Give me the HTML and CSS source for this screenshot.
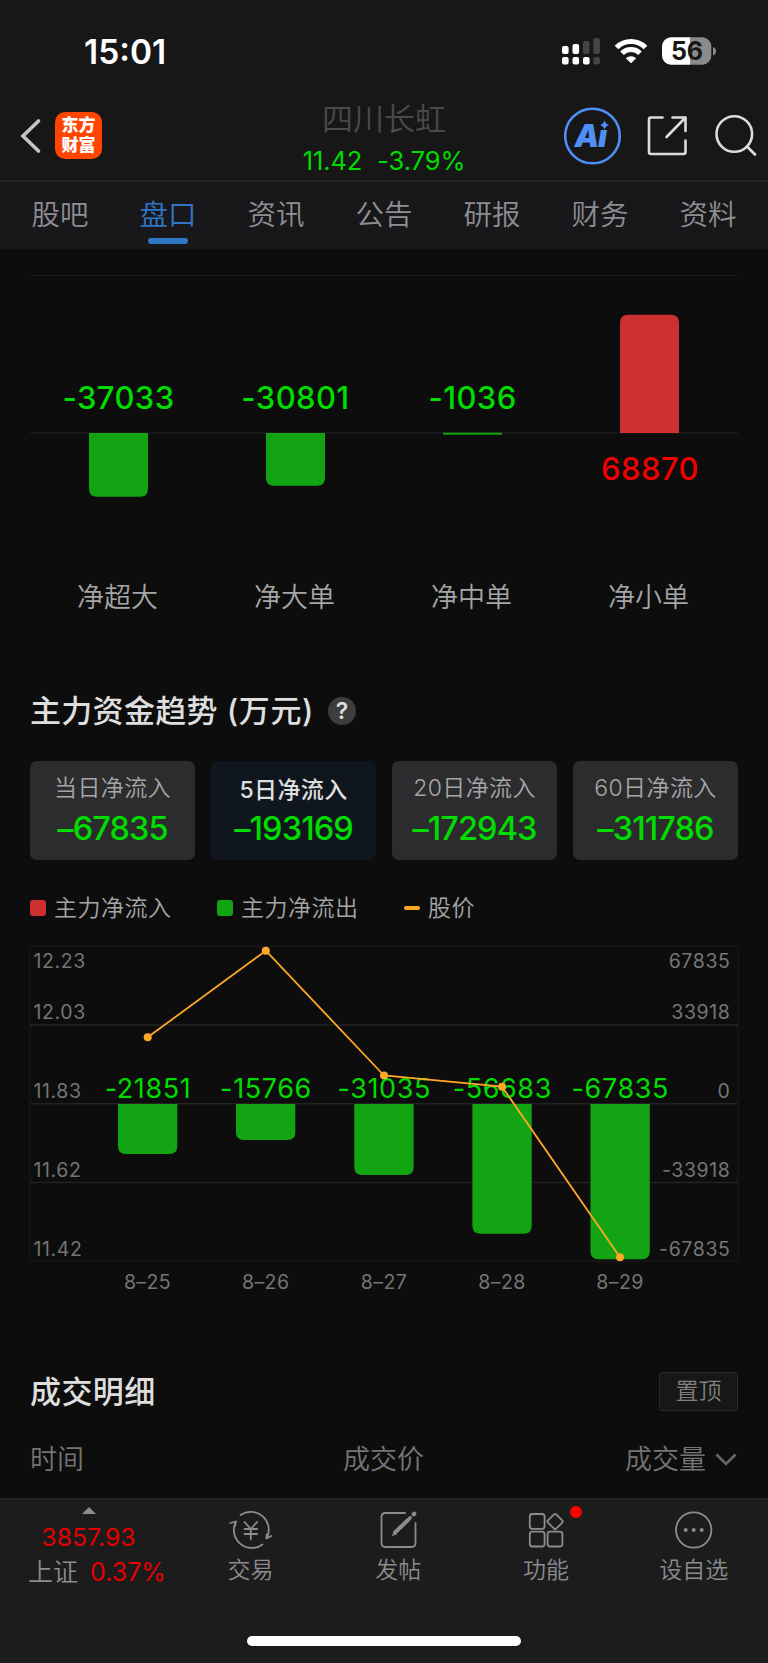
FILE: index.html
```html
<!DOCTYPE html>
<html lang="zh-CN">
<head>
    <meta charset="UTF-8">
    <meta name="viewport" content="width=device-width, initial-scale=1.0">
    <title>四川长虹</title>
    <link rel="stylesheet" href="styles.css">
</head>
<body>
    <div class="status-bar">
        <div class="clock">15:01</div>
        <svg class="status-icons" width="160" height="40" viewBox="0 0 160 40">
            <g fill="#fff">
                <rect x="2" y="16" width="6.6" height="8" rx="2"/>
                <rect x="12.5" y="14" width="6.6" height="10" rx="2"/>
                <rect x="2" y="27" width="6.6" height="7.6" rx="2"/>
                <rect x="12.5" y="27" width="6.6" height="7.6" rx="2"/>
                <rect x="23" y="27" width="6.6" height="7.6" rx="2"/>
            </g>
            <g fill="#454545">
                <rect x="23" y="11" width="6.6" height="13" rx="2"/>
                <rect x="33.3" y="8" width="6.6" height="16" rx="2"/>
                <rect x="33.3" y="27" width="6.6" height="7.6" rx="2"/>
            </g>
            <g fill="none" stroke="#fff" stroke-width="5">
                <path d="M56.5 17.5 A20.5 20.5 0 0 1 85.5 17.5"/>
                <path d="M62 23.3 A12.8 12.8 0 0 1 80 23.3"/>
            </g>
            <path d="M65.8 28.2 A7.6 7.6 0 0 1 76.2 28.2 L71 33.3 Z" fill="#fff"/>
            <path d="M111 7.3 H130 V34.7 H111 A9 9 0 0 1 102 25.7 V16.3 A9 9 0 0 1 111 7.3 Z" fill="#fff"/>
            <path d="M130 7.3 H142.3 A9 9 0 0 1 151.3 16.3 V25.7 A9 9 0 0 1 142.3 34.7 H130 Z" fill="#8b8b8b"/>
            <path d="M153 17 A4.5 4.5 0 0 1 153 25.5 Z" fill="#8b8b8b"/>
            <text class="battery-text" x="127" y="30" text-anchor="middle">56</text>
        </svg>
    </div>

    <div class="header">
        <div class="header-left">
            <svg width="24" height="40" viewBox="0 0 24 40">
                <path d="M18.5 5 L3 20 L18.5 35" fill="none" stroke="#c4c4c4" stroke-width="3.6" stroke-linecap="round"/>
            </svg>
            <div class="logo">东方<br>财富</div>
        </div>
        <div class="stock">
            <div class="stock-name">四川长虹</div>
            <div class="stock-price"><span>11.42</span><span>-3.79%</span></div>
        </div>
        <div class="header-right">
            <svg width="58" height="58" viewBox="0 0 58 58">
                <circle cx="28.5" cy="29" r="27.3" fill="none" stroke="#4f8ef5" stroke-width="2.6"/>
                <text class="ai-text" x="10.5" y="39.5">A</text>
                <text class="ai-text" x="34" y="39.5">ı</text>
                <path d="M40.5 13.5 Q41.5 17 45 18 Q41.5 19 40.5 22.5 Q39.5 19 36 18 Q39.5 17 40.5 13.5 Z" fill="#4f8ef5"/>
            </svg>
            <svg width="42" height="42" viewBox="0 0 42 42" fill="none" stroke="#dcdcdc" stroke-width="2.6" stroke-linecap="round" stroke-linejoin="round">
                <path d="M15.5 2.5 H4 Q2 2.5 2 4.5 V37 Q2 39 4 39 H36.5 Q38.5 39 38.5 37 V25.5"/>
                <path d="M25.5 2.5 H38.5 V16 M38.5 2.5 L19.5 22"/>
            </svg>
            <svg width="44" height="44" viewBox="0 0 44 44" fill="none" stroke="#dcdcdc" stroke-width="2.6" stroke-linecap="round">
                <circle cx="20.3" cy="20" r="17.8"/>
                <path d="M33 32.5 L41 40.5"/>
            </svg>
        </div>
    </div>

    <div class="tabs">
        <div class="tab">股吧</div>
        <div class="tab active">盘口</div>
        <div class="tab">资讯</div>
        <div class="tab">公告</div>
        <div class="tab">研报</div>
        <div class="tab">财务</div>
        <div class="tab">资料</div>
    </div>

    <!-- net inflow by order size -->
    <svg class="order-chart" width="768" height="391" viewBox="0 0 768 391">
        <path d="M30 26.5 H738" stroke="#1b1b1b"/>
        <path d="M30 184 H738" stroke="#1b1b1b" stroke-width="1.5"/>
        <g fill="#12a412">
            <path d="M89 184 H148 V239.7 Q148 247.7 140 247.7 H97 Q89 247.7 89 239.7 Z"/>
            <path d="M266 184 H325 V228.7 Q325 236.7 317 236.7 H274 Q266 236.7 266 228.7 Z"/>
            <rect x="443" y="183.7" width="59" height="2"/>
        </g>
        <path d="M620 184 V73.7 Q620 65.7 628 65.7 H671 Q679 65.7 679 73.7 V184 Z" fill="#cd3030"/>
        <g class="order-value">
            <text x="118.5" y="159.5">-37033</text>
            <text x="295.5" y="159.5">-30801</text>
            <text x="472.5" y="159.5">-1036</text>
            <text class="up" x="650" y="230.5">68870</text>
        </g>
        <g class="order-label">
            <text x="117.5" y="357.5">净超大</text>
            <text x="294.5" y="357.5">净大单</text>
            <text x="471.5" y="357.5">净中单</text>
            <text x="648.5" y="357.5">净小单</text>
        </g>
    </svg>

    <div class="section-title">
        <h2>主力资金趋势<span class="unit">(万元)</span></h2>
        <span class="help">?</span>
    </div>

    <div class="cards">
        <div class="card">
            <div class="card-label">当日净流入</div>
            <div class="card-value">–67835</div>
        </div>
        <div class="card selected">
            <div class="card-label">5日净流入</div>
            <div class="card-value">–193169</div>
        </div>
        <div class="card">
            <div class="card-label">20日净流入</div>
            <div class="card-value">–172943</div>
        </div>
        <div class="card">
            <div class="card-label">60日净流入</div>
            <div class="card-value">–311786</div>
        </div>
    </div>

    <div class="legend">
        <div class="legend-item"><i class="swatch red"></i>主力净流入</div>
        <div class="legend-item"><i class="swatch green"></i>主力净流出</div>
        <div class="legend-item"><i class="dash"></i>股价</div>
    </div>

    <!-- five day trend: bars, price line, two axes -->
    <svg class="trend-chart" width="768" height="380" viewBox="0 0 768 380">
        <rect x="30" y="16.5" width="708" height="314.5" fill="none" stroke="#1c1c1c"/>
        <path d="M30 95 H738 M30 173.7 H738 M30 252.5 H738" stroke="#232323" stroke-width="1.5"/>
        <g fill="#12a412">
            <path d="M118 174 H177.3 V216 Q177.3 224 169.3 224 H126 Q118 224 118 216 Z"/>
            <path d="M236 174 H295.3 V202 Q295.3 210 287.3 210 H244 Q236 210 236 202 Z"/>
            <path d="M354.3 174 H413.6 V237 Q413.6 245 405.6 245 H362.3 Q354.3 245 354.3 237 Z"/>
            <path d="M472.4 174 H531.7 V295.7 Q531.7 303.7 523.7 303.7 H480.4 Q472.4 303.7 472.4 295.7 Z"/>
            <path d="M590.5 174 H649.8 V321.3 Q649.8 329.3 641.8 329.3 H598.5 Q590.5 329.3 590.5 321.3 Z"/>
        </g>
        <g class="axis">
            <text x="33.5" y="37.5">12.23</text>
            <text x="33.5" y="88.6">12.03</text>
            <text x="33.5" y="167.5">11.83</text>
            <text x="33.5" y="246.5">11.62</text>
            <text x="33.5" y="325.5">11.42</text>
        </g>
        <g class="axis right">
            <text x="730.5" y="37.5">67835</text>
            <text x="730.5" y="88.6">33918</text>
            <text x="730.5" y="167.5">0</text>
            <text x="730.5" y="246.5">-33918</text>
            <text x="730.5" y="325.5">-67835</text>
        </g>
        <g class="bar-value">
            <text x="148" y="167.6">-21851</text>
            <text x="266" y="167.6">-15766</text>
            <text x="384.3" y="167.6">-31035</text>
            <text x="502.3" y="167.6">-56683</text>
            <text x="620.3" y="167.6">-67835</text>
        </g>
        <g class="axis date">
            <text x="147.5" y="358.5">8–25</text>
            <text x="265.7" y="358.5">8–26</text>
            <text x="384" y="358.5">8–27</text>
            <text x="502" y="358.5">8–28</text>
            <text x="620" y="358.5">8–29</text>
        </g>
        <polyline points="147.7,107.3 265.8,20.7 384,145.5 502,156.7 620,327.3" fill="none" stroke="#ffa726" stroke-width="1.8"/>
        <g fill="#ffa726">
            <circle cx="147.7" cy="107.3" r="4"/>
            <circle cx="265.8" cy="20.7" r="4"/>
            <circle cx="384" cy="145.5" r="4"/>
            <circle cx="502" cy="156.7" r="4"/>
            <circle cx="620" cy="327.3" r="4"/>
        </g>
    </svg>

    <div class="deals-title">
        <h2>成交明细</h2>
        <div class="pin">置顶</div>
    </div>
    <div class="deals-head">
        <span>时间</span>
        <span>成交价</span>
        <span>成交量
            <svg width="22" height="14" viewBox="0 0 22 14">
                <path d="M1.5 1.5 L11 11 L20.5 1.5" fill="none" stroke="#686868" stroke-width="2.6"/>
            </svg>
        </span>
    </div>

    <div class="bottom-bar">
        <div class="index">
            <i class="triangle"></i>
            <div class="index-value">3857.93</div>
            <div class="index-row"><span>上证</span><span class="up">0.37%</span></div>
        </div>
        <div class="nav-item">
            <svg width="44" height="44" viewBox="0 0 44 44" fill="none" stroke="#8b8b90" stroke-width="1.8" stroke-linecap="round" stroke-linejoin="round">
                <path d="M11.5 7 A18 18 0 0 1 37.5 30.5 L42.3 28 M37.5 30.5 L37.7 26.5"/>
                <path d="M33.5 36.5 A18 18 0 0 1 7 13.5 L1.3 15 M7 13.5 L6 18"/>
                <path d="M15.5 14 L21.8 21 L28.1 14 M21.8 21 V31.5 M15.5 21 H28.1 M15.5 26 H28.1"/>
            </svg>
            <span>交易</span>
        </div>
        <div class="nav-item">
            <svg width="44" height="44" viewBox="0 0 44 44" fill="none" stroke="#8b8b90" stroke-width="1.8" stroke-linecap="round">
                <path d="M28 5 H8.5 Q4.5 5 4.5 9 V35 Q4.5 39 8.5 39 H34.5 Q38.5 39 38.5 35 V15"/>
                <path d="M36.7 6.3 L37.3 5.7" stroke-width="4.3"/>
                <path d="M32.5 10.5 L33.3 9.8" stroke-width="3.5"/>
                <path d="M31 12 L18 24.5" stroke-width="4"/>
                <path d="M17 24 L15.5 27.5 L19.5 26" stroke-width="1"/>
            </svg>
            <span>发帖</span>
        </div>
        <div class="nav-item">
            <svg width="44" height="44" viewBox="0 0 44 44" fill="none" stroke="#8b8b90" stroke-width="1.8">
                <rect x="5.8" y="6" width="14.8" height="14.8" rx="2.5"/>
                <rect x="5.8" y="23.7" width="14.8" height="14.8" rx="2.5"/>
                <rect x="23.6" y="23.7" width="14.8" height="14.8" rx="2.5"/>
                <rect x="25.3" y="7.7" width="11.6" height="11.6" rx="1.5" transform="rotate(45 31.1 13.5)"/>
            </svg>
            <span>功能</span>
            <i class="dot"></i>
        </div>
        <div class="nav-item">
            <svg width="44" height="44" viewBox="0 0 44 44">
                <circle cx="21.7" cy="22" r="17.7" fill="none" stroke="#8b8b90" stroke-width="1.8"/>
                <g fill="#8b8b90">
                    <circle cx="13.7" cy="22" r="2"/>
                    <circle cx="21.7" cy="22" r="2"/>
                    <circle cx="29.7" cy="22" r="2"/>
                </g>
            </svg>
            <span>设自选</span>
        </div>
        <div class="home-indicator"></div>
    </div>
</body>
</html>
```
FILE: styles.css
```css
* {
    box-sizing: border-box;
}
body {
    margin: 0;
    width: 768px;
    height: 1663px;
    overflow: hidden;
    background-color: #0d0d0d;
    font-family: Inter, "Noto Sans CJK SC", sans-serif;
    font-weight: 350;
    color: #a6a6a6;
}
svg {
    display: block;
    flex-shrink: 0;
}
h2 {
    margin: 0;
    font-size: 31px;
    font-weight: 500;
    line-height: 40px;
    letter-spacing: 0.3px;
    color: #dedede;
}
.up {
    color: #e60000;
}

/* status bar */
.status-bar {
    display: flex;
    justify-content: space-between;
    height: 96px;
    padding: 30px 48px 0 84px;
    background-color: #171717;
}
.clock {
    font-size: 33.5px;
    font-weight: 600;
    line-height: 45px;
    color: #fff;
}
.battery-text {
    font-size: 25px;
    font-weight: 700;
    fill: #171717;
}

/* header */
.header {
    display: grid;
    grid-template-columns: 1fr 170px 1fr;
    height: 84px;
    padding: 0 10px 0 20px;
    background-color: #171717;
}
.header-left {
    display: flex;
    align-items: center;
    gap: 11px;
    height: 79px;
}
.logo {
    width: 47px;
    height: 47px;
    padding-top: 4px;
    border-radius: 10px;
    background-color: #ff4500;
    color: #fff;
    font-size: 17px;
    font-weight: 900;
    line-height: 19.5px;
    text-align: center;
}
.stock {
    margin-left: -10px;
    text-align: center;
}
.stock-name {
    margin-top: 3px;
    font-size: 31px;
    line-height: 40px;
    color: #4a4a4a;
}
.stock-price {
    display: flex;
    justify-content: center;
    gap: 15px;
    font-size: 25.5px;
    font-weight: 400;
    line-height: 32px;
    letter-spacing: -0.1px;
    color: #00dc00;
    margin-top: 6px;
}
.header-right {
    display: flex;
    justify-content: flex-end;
    align-items: center;
    gap: 25px;
    height: 80px;
}
.ai-text {
    font-size: 31px;
    font-weight: 900;
    font-style: italic;
    fill: #4f8ef5;
}

/* tabs */
.tabs {
    display: flex;
    height: 69px;
    padding: 0 6px;
    border-top: 2px solid #242426;
    border-bottom: 1px solid #171719;
    background-color: #18181a;
}
.tab {
    position: relative;
    flex: 1;
    font-size: 28.5px;
    line-height: 66px;
    text-align: center;
    color: #8e8e93;
}
.tab.active {
    color: #3076c6;
}
.tab.active::after {
    content: "";
    position: absolute;
    left: 50%;
    bottom: 4px;
    width: 40px;
    height: 6px;
    margin-left: -20px;
    border-radius: 3px;
    background-color: #3076c6;
}

/* order chart */
.order-value {
    font-size: 31px;
    font-weight: 550;
    letter-spacing: 0.4px;
    text-anchor: middle;
    fill: #00dc00;
}
.order-value .up {
    fill: #f00000;
}
.order-label {
    font-size: 27px;
    text-anchor: middle;
    fill: #a6a6a6;
}

/* trend section */
.section-title {
    display: flex;
    align-items: center;
    gap: 14px;
    height: 40px;
    margin-top: 51px;
    padding-left: 30px;
}
.unit {
    margin-left: 9px;
    letter-spacing: 0.6px;
}
.help {
    width: 28px;
    height: 28px;
    border-radius: 50%;
    background-color: #3d3d3d;
    color: #dedede;
    font-size: 23px;
    font-weight: 600;
    line-height: 28px;
    text-align: center;
}
.cards {
    display: grid;
    grid-template-columns: repeat(4, 1fr);
    gap: 16px;
    margin-top: 30px;
    padding: 0 30px;
}
.card {
    height: 99px;
    padding-top: 11px;
    border-radius: 7px;
    background-color: #2c2c2e;
    text-align: center;
}
.card-label {
    font-size: 23px;
    line-height: 33px;
    letter-spacing: 0.4px;
}
.card-value {
    margin-top: 5px;
    font-size: 32.5px;
    font-weight: 500;
    line-height: 38px;
    letter-spacing: -0.9px;
    color: #00dc00;
}
.card.selected {
    background-color: #10161d;
}
.selected .card-label {
    padding-top: 2px;
    margin-bottom: -2px;
    color: #dedede;
    font-weight: 500;
}
.legend {
    display: flex;
    align-items: center;
    gap: 45.5px;
    height: 70px;
    padding: 25px 30px 0;
    font-size: 23px;
    line-height: 32px;
    letter-spacing: 0.5px;
}
.legend-item {
    display: flex;
    align-items: center;
}
.swatch {
    width: 16px;
    height: 16px;
    margin-right: 8px;
    border-radius: 3px;
}
.red {
    background-color: #cd3030;
}
.green {
    background-color: #12a412;
}
.dash {
    width: 16px;
    height: 4px;
    margin-right: 8px;
    border-radius: 2px;
    background-color: #ffa726;
}
.axis {
    font-size: 19.5px;
    font-weight: 400;
    letter-spacing: 0.6px;
    fill: #757575;
}
.axis.right {
    text-anchor: end;
}
.axis.date {
    text-anchor: middle;
    letter-spacing: 0.4px;
}
.bar-value {
    font-size: 27px;
    font-weight: 400;
    letter-spacing: 0.6px;
    text-anchor: middle;
    fill: #00dc00;
}

/* deals */
.deals-title {
    display: flex;
    justify-content: space-between;
    align-items: center;
    height: 40px;
    margin-top: 61px;
    padding: 0 30px;
}
.deals-title h2 {
    padding-top: 1px;
    letter-spacing: 0.4px;
}
.pin {
    width: 79px;
    height: 39px;
    border: 1px solid #292929;
    border-radius: 3px;
    background-color: #171717;
    color: #808080;
    font-size: 23px;
    line-height: 37px;
    text-align: center;
}
.deals-head {
    display: grid;
    grid-template-columns: 1fr 1fr 1fr;
    margin-top: 29px;
    padding: 0 31px 0 30px;
    font-size: 27px;
    line-height: 40px;
    color: #757575;
}
.deals-head span:nth-child(2) {
    text-align: center;
}
.deals-head span:nth-child(3) {
    display: flex;
    justify-content: flex-end;
    align-items: center;
    gap: 9px;
}

/* bottom bar */
.bottom-bar {
    position: absolute;
    left: 0;
    top: 1498px;
    display: flex;
    width: 768px;
    height: 165px;
    border-top: 2px solid #222;
    background-color: #1c1c1c;
    color: #8b8b90;
}
.index {
    display: flex;
    flex-direction: column;
    align-items: center;
    width: 177px;
    padding-top: 7px;
}
.triangle {
    border: 7px solid transparent;
    border-top: 0;
    border-bottom-color: #8b8b90;
}
.index-value {
    margin-top: 7px;
    font-size: 24.8px;
    font-weight: 400;
    line-height: 33px;
    color: #e60000;
}
.index-row {
    display: flex;
    gap: 12px;
    font-size: 25px;
    line-height: 36px;
    padding-left: 17px;
}
.index-row .up {
    font-weight: 400;
}
.nav-item {
    position: relative;
    flex: 1;
    display: flex;
    flex-direction: column;
    align-items: center;
    padding-top: 8px;
    font-size: 23px;
    line-height: 34px;
}
.nav-item span {
    margin-top: 1px;
    padding-right: 1px;
}
.dot {
    position: absolute;
    top: 6px;
    left: 97px;
    width: 12px;
    height: 12px;
    border-radius: 50%;
    background-color: #f00;
}
.home-indicator {
    position: absolute;
    left: 247px;
    bottom: 17px;
    width: 274px;
    height: 10px;
    border-radius: 5px;
    background-color: #fff;
}
```
